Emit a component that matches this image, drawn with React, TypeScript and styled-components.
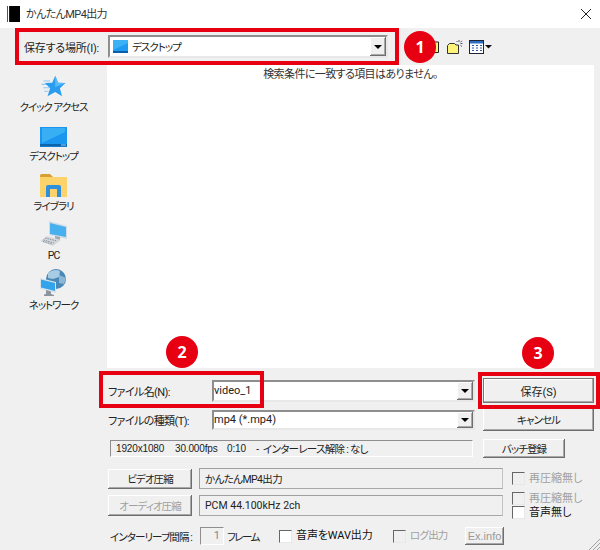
import React from "react";
import styled, { createGlobalStyle, css } from "styled-components";

const Global = createGlobalStyle`
  html, body { margin: 0; padding: 0; background: #f0f0f0; }
  * { box-sizing: border-box; }
  body {
    font-family: Roboto, "Noto Sans CJK JP", "Noto Sans", sans-serif;
    font-size: 11px;
    color: #222;
    font-feature-settings: "palt";
  }
`;

const Dialog = styled.div`
  position: relative;
  width: 600px;
  height: 550px;
  overflow: hidden;
  background: #f0f0f0;
`;

const TitleBar = styled.div`
  height: 28px;
  background: #fff;
  display: flex;
  align-items: center;
  padding: 0 9px 0 7px;
  gap: 6px;
  color: #333;
`;
const TitleText = styled.span`
  flex: 1;
  position: relative;
  top: -1px;
  letter-spacing: -0.6px;
`;

const sunken = css`
  border-style: solid;
  border-width: 2px;
  border-color: #8e8e8e #e8e8e8 #e8e8e8 #8e8e8e;
  background: #fff;
`;
const raised = css`
  border: none;
  background: #f0f0f0;
  box-shadow: inset -1px -1px 0 #6e6e6e, inset 1px 1px 0 #fff, inset -2px -2px 0 #a8a8a8;
`;

const Toolbar = styled.div`
  height: 37px;
  display: flex;
  align-items: center;
  padding-left: 24px;
`;
const LookInLabel = styled.span`
  width: 84px;
  white-space: nowrap;
  letter-spacing: -0.2px;
`;
const Combo = styled.div<{ $w: number; $h: number }>`
  ${sunken}
  width: ${(p) => p.$w}px;
  height: ${(p) => p.$h}px;
  display: flex;
  align-items: center;
  color: #222;
`;
const ComboText = styled.span`
  flex: 1;
  display: flex;
  align-items: center;
  gap: 4px;
  padding-left: 3px;
  font-size: 10.5px;
  letter-spacing: -1px;
`;
const DropButton = styled.span`
  ${raised}
  width: 16px;
  height: 100%;
  display: flex;
  align-items: center;
  justify-content: center;
  flex: none;
  &::after {
    content: "";
    border-left: 4px solid transparent;
    border-right: 4px solid transparent;
    border-top: 4px solid #000;
  }
`;
const ToolIcons = styled.div`
  display: flex;
  align-items: center;
  gap: 6px;
  margin-left: 44px;
`;

const Main = styled.div`
  height: 303px;
  display: flex;
`;
const Sidebar = styled.div`
  width: 107px;
  display: flex;
  flex-direction: column;
`;
const Place = styled.div`
  height: 49.5px;
  display: flex;
  flex-direction: column;
  align-items: center;
  justify-content: flex-end;
  gap: 2px;
  font-size: 10.5px;
  letter-spacing: -1px;
  line-height: 15px;
  color: #222;
`;
const FileList = styled.div`
  width: 487px;
  background: #fff;
  text-align: center;
  line-height: 16px;
  color: #333;
  letter-spacing: -0.6px;
  padding: 2px 0 0 0;
`;

const Form = styled.div`
  display: flex;
  flex-direction: column;
  padding: 10px 6px 0 108px;
`;
const Row = styled.div<{ $h: number; $mt: number }>`
  display: flex;
  align-items: center;
  height: ${(p) => p.$h}px;
  margin-top: ${(p) => p.$mt}px;
`;
const FieldLabel = styled.span`
  width: 104px;
  white-space: nowrap;
  letter-spacing: -0.6px;
`;
const FieldText = styled.span`
  flex: 1;
`;
const Button = styled.button<{ $w: number; $h: number; $off?: boolean; $gap?: number }>`
  ${raised}
  width: ${(p) => p.$w}px;
  height: ${(p) => p.$h}px;
  margin-left: ${(p) => p.$gap ?? 0}px;
  font-family: inherit;
  font-size: 10.5px;
  letter-spacing: -0.9px;
  font-feature-settings: "palt";
  padding: 0;
  flex: none;
  color: ${(p) => (p.$off ? "#a0a0a0" : "#222")};
`;
const SaveButton = styled(Button)`
  font-size: 11px;
  letter-spacing: 0;
  box-shadow: inset 0 0 0 1px #777, inset -2px -2px 0 #a8a8a8, inset 2px 2px 0 #fff;
`;
const InfoBox = styled.div`
  width: 363px;
  height: 17px;
  margin-left: 2px;
  margin-right: 10px;
  border-style: solid;
  border-width: 1px;
  border-color: #8e8e8e #fff #fff #8e8e8e;
  display: flex;
  align-items: center;
  padding-left: 5px;
  white-space: pre;
  color: #222;
  font-size: 10.5px;
`;
const InfoNumber = styled.span<{ $w: number }>`
  width: ${(p) => p.$w}px;
  flex: none;
  font-family: "Liberation Sans", sans-serif;
  font-size: 10px;
  letter-spacing: -0.15px;
`;
const InfoKana = styled.span`
  letter-spacing: -0.7px;
`;
const TextBox = styled.div`
  width: 304px;
  height: 21px;
  margin-left: 7px;
  margin-right: 9px;
  border: 1px solid #a0a0a0;
  border-right-color: #c4c4c4;
  border-bottom-color: #a8a8a8;
  display: flex;
  align-items: center;
  padding-left: 5px;
  color: #222;
  font-size: 10.5px;
`;
const TightText = styled.span`
  letter-spacing: -0.6px;
`;
const Check = styled.span<{ $off?: boolean }>`
  width: 13px;
  height: 13px;
  flex: none;
  border-style: solid;
  border-width: 1px;
  border-color: #666 #e8e8e8 #e8e8e8 #666;
  background: ${(p) => (p.$off ? "#f0f0f0" : "#fff")};
`;
const CheckRow = styled.label<{ $off?: boolean }>`
  display: flex;
  align-items: center;
  gap: 4px;
  line-height: 14px;
  white-space: nowrap;
  color: ${(p) => (p.$off ? "#a0a0a0" : "#111")};
`;
const CheckStack = styled.div`
  display: flex;
  flex-direction: column;
`;
const BottomLabel = styled.span`
  margin-left: 2px;
  width: 90px;
  white-space: nowrap;
  font-size: 10.5px;
  letter-spacing: -0.9px;
`;
const SmallInput = styled.span`
  width: 24px;
  height: 18px;
  border-style: solid;
  border-width: 1px;
  border-color: #8e8e8e #fff #fff #8e8e8e;
  text-align: right;
  padding-right: 3px;
  line-height: 16px;
  color: #888;
`;
const FrameLabel = styled.span`
  margin-left: 3px;
  width: 52px;
  white-space: nowrap;
  font-size: 10.5px;
  letter-spacing: -1.5px;
`;
const WavCheck = styled(CheckRow)`
  width: 114px;
  letter-spacing: -0.1px;
`;
const LogCheck = styled(CheckRow)`
  width: 60px;
  font-size: 10.5px;
  letter-spacing: -0.8px;
`;
const ExButton = styled.button`
  ${raised}
  width: 39px;
  height: 18px;
  margin-left: 12px;
  padding: 0;
  font-family: "Liberation Sans", sans-serif;
  font-size: 11px;
  color: #999;
`;

const Frame = styled.div<{ $x: number; $y: number; $w: number; $h: number }>`
  position: absolute;
  left: ${(p) => p.$x}px;
  top: ${(p) => p.$y}px;
  width: ${(p) => p.$w}px;
  height: ${(p) => p.$h}px;
  border: 4px solid #e60012;
  pointer-events: none;
`;
const Badge = styled.div<{ $x: number; $y: number }>`
  position: absolute;
  left: ${(p) => p.$x - 16}px;
  top: ${(p) => p.$y - 16}px;
  width: 32px;
  height: 32px;
  border-radius: 50%;
  background: #e60012;
  color: #fff;
  font-family: "Open Sans", "Noto Sans", sans-serif;
  font-weight: 700;
  font-size: 16px;
  line-height: 32px;
  text-align: center;
`;
const Grip = styled.svg`
  position: absolute;
  right: 0;
  bottom: 0;
`;

const FilmIcon = () => (
  <svg width="13" height="16" viewBox="0 0 13 16">
    <rect x="0" y="0" width="1" height="16" fill="#555" />
    <rect x="2" y="0" width="1" height="16" fill="#222" />
    <rect x="3" y="0" width="10" height="16" fill="#000" />
  </svg>
);
const CloseIcon = () => (
  <svg width="10" height="10" viewBox="0 0 10 10">
    <path d="M0 0L10 10M10 0L0 10" stroke="#222" strokeWidth="1" fill="none" />
  </svg>
);
const DesktopSmall = () => (
  <svg width="15" height="13" viewBox="0 0 15 13">
    <rect x="0" y="0" width="15" height="12" fill="#1e9bf0" />
    <path d="M0 0H15V3L0 10Z" fill="#3cb2f6" />
    <rect x="0" y="11" width="15" height="2" fill="#0a5fa8" />
  </svg>
);
const NewFolderIcon = () => (
  <svg width="16" height="14" viewBox="0 0 16 14">
    <path d="M0.5 5.500L2.500 3.500H7.500L9 5H11.500V13.500H0.500Z" fill="#fff47a" stroke="#333" />
    <path d="M12 0v2M15.500 3.500h-2M9.500 1l1 1M15 .8l-1.500 1.500M15 6.500l-1.500-1.200" stroke="#556" strokeWidth="1" />
  </svg>
);
const OldFolderIcon = () => (
  <svg width="9" height="12" viewBox="0 0 9 12">
    <path d="M1 1H6.500V11.500H1Z" fill="#fff47a" stroke="#222" />
  </svg>
);
const ViewIcon = () => (
  <svg width="23" height="14" viewBox="0 0 23 14">
    <rect x="0.500" y="0.500" width="14" height="13" fill="#fff" stroke="#223" />
    <rect x="1" y="1" width="13" height="2.500" fill="#2a6fc0" />
    <path d="M3 5.500h2M7 5.500h2M11 5.500h2M3 8h2M7 8h2M11 8h2M3 10.500h2M7 10.500h2M11 10.500h2" stroke="#2a5ca8" />
    <path d="M16 5H23L19.500 8.500Z" fill="#111" />
  </svg>
);
const StarIcon = () => (
  <svg width="27" height="23" viewBox="0 0 28 27">
    <path d="M2 7h8M0 11h8M2 15h7M3 19h5" stroke="#8ccaf6" strokeWidth="1.200" />
    <path d="M16 1L19.500 9L28 9.500L21.500 15.500L24 25L16 20L7 25L10 15.500L4 9.500L12.500 9Z" fill="#2a9df0" />
    <path d="M16 1L19.500 9L28 9.500L16 14Z" fill="#58bcf8" />
  </svg>
);
const DesktopIcon = () => (
  <svg width="27" height="20" viewBox="0 0 27 20">
    <rect x="0" y="0" width="27" height="20" fill="#1b96ee" />
    <path d="M2 1H25V5L2 16Z" fill="#38aef5" />
    <rect x="0" y="17" width="27" height="2.500" fill="#0e64ac" />
    <rect x="21" y="17.500" width="5" height="1" fill="#9cd2f4" />
  </svg>
);
const LibraryIcon = () => (
  <svg width="27" height="23" viewBox="0 0 27 23">
    <path d="M0 1.500Q0 0 1.500 0H10L13 3H0Z" fill="#d8a030" />
    <rect x="0" y="3" width="27" height="20" fill="#fcd36a" />
    <path d="M6 17V13Q6 11 8 11H19Q21 11 21 13V17H17V15H10V17Z" fill="#2f8fdc" />
    <rect x="6" y="17" width="4" height="6" fill="#2f8fdc" />
    <rect x="17" y="17" width="4" height="6" fill="#2f8fdc" />
  </svg>
);
const PcIcon = () => (
  <svg width="28" height="25" viewBox="0 0 28 25">
    <path d="M9 0L27 5V18L9 14Z" fill="#d0dce6" />
    <path d="M10 2L26 6V16L10 13Z" fill="#48b0ee" />
    <path d="M15 15L20 16V19L15 18Z" fill="#a0a8b0" />
    <path d="M7 15L21 19L13 25L0 20Z" fill="#d4d8dc" />
    <path d="M5 17L17 20M3.500 19L14 22M3 20.500L12 23" stroke="#8a9098" strokeWidth="1" strokeDasharray="1.500 1" />
  </svg>
);
const NetIcon = () => (
  <svg width="27" height="27" viewBox="0 0 27 27">
    <circle cx="16" cy="10" r="10" fill="#4a88b8" />
    <path d="M8 4Q14 -1 20 2L19 8L13 10L8 9Z" fill="#a8cce4" />
    <path d="M19 6L26 9L24 15L19 14Z" fill="#8cb8d6" />
    <path d="M0 9L16 13V24L0 20Z" fill="#d8e2ea" />
    <path d="M1 10.500L15 14V22L1 18.500Z" fill="#33a3ec" />
    <path d="M6 21L11 22.500V25L14 26V27H4V25.500L6 25Z" fill="#8c949c" />
  </svg>
);
const GripIcon = () => (
  <Grip width="12" height="12" viewBox="0 0 12 12">
    <path d="M12 1L1 12M12 5L5 12M12 9L9 12" stroke="#a0a0a0" strokeWidth="1" />
  </Grip>
);

const places = [
  { label: "クイック アクセス", icon: <StarIcon /> },
  { label: "デスクトップ", icon: <DesktopIcon /> },
  { label: "ライブラリ", icon: <LibraryIcon /> },
  { label: "PC", icon: <PcIcon /> },
  { label: "ネットワーク", icon: <NetIcon /> },
];

export default function App() {
  return (
    <Dialog>
      <Global />
      <TitleBar>
        <FilmIcon />
        <TitleText>かんたんMP4出力</TitleText>
        <CloseIcon />
      </TitleBar>
      <Toolbar>
        <LookInLabel>保存する場所(I):</LookInLabel>
        <Combo $w={280} $h={23}>
          <ComboText>
            <DesktopSmall />
            デスクトップ
          </ComboText>
          <DropButton />
        </Combo>
        <ToolIcons>
          <OldFolderIcon />
          <NewFolderIcon />
          <ViewIcon />
        </ToolIcons>
      </Toolbar>
      <Main>
        <Sidebar>
          {places.map((p) => (
            <Place key={p.label}>
              {p.icon}
              <span>{p.label}</span>
            </Place>
          ))}
        </Sidebar>
        <FileList>検索条件に一致する項目はありません。</FileList>
      </Main>
      <Form>
        <Row $h={25} $mt={0}>
          <FieldLabel>ファイル名(N):</FieldLabel>
          <Combo $w={263} $h={22}>
            <FieldText>video_1</FieldText>
            <DropButton />
          </Combo>
          <SaveButton $w={111} $h={25} $gap={8}>保存(S)</SaveButton>
        </Row>
        <Row $h={23} $mt={5}>
          <FieldLabel>ファイルの種類(T):</FieldLabel>
          <Combo $w={263} $h={20}>
            <FieldText>mp4 (*.mp4)</FieldText>
            <DropButton />
          </Combo>
          <Button $w={111} $h={23} $gap={8}>キャンセル</Button>
        </Row>
        <Row $h={19} $mt={8}>
          <InfoBox>
            <InfoNumber $w={59}>1920x1080</InfoNumber>
            <InfoNumber $w={52}>30.000fps</InfoNumber>
            <InfoNumber $w={29}>0:10</InfoNumber>
            <InfoNumber $w={7}>-</InfoNumber>
            <InfoKana>インターレース解除 : なし</InfoKana>
          </InfoBox>
          <Button $w={82} $h={19}>バッチ登録</Button>
        </Row>
        <Row $h={21} $mt={10}>
          <Button $w={84} $h={20}>ビデオ圧縮</Button>
          <TextBox><TightText>かんたんMP4出力</TightText></TextBox>
          <CheckRow $off>
            <Check $off />
            再圧縮無し
          </CheckRow>
        </Row>
        <Row $h={27} $mt={3}>
          <Button $w={84} $h={21} $off>オーディオ圧縮</Button>
          <TextBox>PCM 44.100kHz 2ch</TextBox>
          <CheckStack>
            <CheckRow $off>
              <Check $off />
              再圧縮無し
            </CheckRow>
            <CheckRow>
              <Check />
              音声無し
            </CheckRow>
          </CheckStack>
        </Row>
        <Row $h={18} $mt={8}>
          <BottomLabel>インターリーブ間隔 :</BottomLabel>
          <SmallInput>1</SmallInput>
          <FrameLabel>フレーム</FrameLabel>
          <WavCheck>
            <Check />
            音声をWAV出力
          </WavCheck>
          <LogCheck $off>
            <Check $off />
            ログ出力
          </LogCheck>
          <ExButton>Ex.info</ExButton>
        </Row>
      </Form>
      <GripIcon />
      <Frame $x={15} $y={28} $w={384} $h={37} />
      <Frame $x={99} $y={371} $w={165} $h={37} />
      <Frame $x={478} $y={372} $w={122} $h={37} />
      <Badge $x={420} $y={47}>1</Badge>
      <Badge $x={182} $y={352}>2</Badge>
      <Badge $x={538} $y={353}>3</Badge>
    </Dialog>
  );
}
